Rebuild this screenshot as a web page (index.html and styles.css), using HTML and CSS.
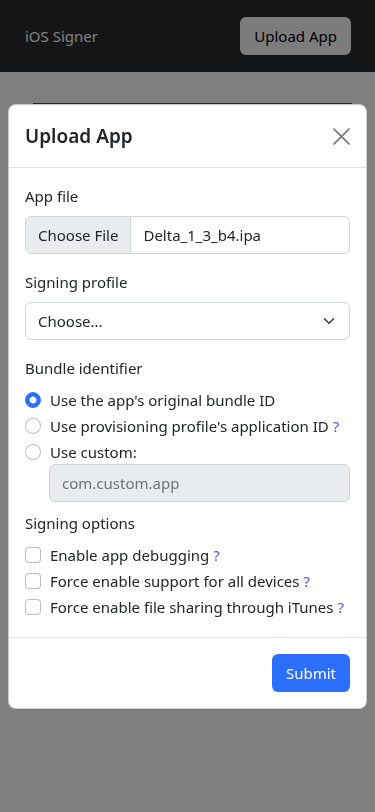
FILE: index.html
```html
<!DOCTYPE html>
<html lang="en">
<head>
    <meta charset="UTF-8">
    <meta name="viewport" content="width=device-width, initial-scale=1.0">
    <title>iOS Signer</title>
    <link rel="stylesheet" href="styles.css">
</head>
<body>
    <nav class="navbar">
        <span class="brand">iOS Signer</span>
        <button class="btn btn-light">Upload App</button>
    </nav>
    <main class="page">
        <div class="jobs-head"></div>
    </main>

    <div class="backdrop"></div>

    <div class="modal">
        <div class="modal-content">
            <div class="modal-header">
                <h5 class="modal-title">Upload App</h5>
                <button class="btn-close" aria-label="Close">
                    <svg width="17" height="17" viewBox="0 0 16 16">
                        <path d="M1 1 15 15M15 1 1 15" stroke="#808080" stroke-width="1.8" stroke-linecap="round" fill="none"/>
                    </svg>
                </button>
            </div>

            <form class="modal-body">
                <div class="field">
                    <label class="form-label">App file</label>
                    <div class="file-input">
                        <span class="file-btn">Choose File</span>
                        <span class="file-name">Delta_1_3_b4.ipa</span>
                    </div>
                </div>

                <div class="field">
                    <label class="form-label">Signing profile</label>
                    <div class="form-select">
                        <span>Choose...</span>
                        <svg width="16" height="12" viewBox="0 0 16 16">
                            <path d="m2 5 6 6 6-6" stroke="#343a40" stroke-width="2" stroke-linecap="round" stroke-linejoin="round" fill="none"/>
                        </svg>
                    </div>
                </div>

                <div class="field bundle">
                    <label class="form-label">Bundle identifier</label>
                    <label class="form-check">
                        <input type="radio" name="bundle" class="check-input radio" checked>
                        <span>Use the app's original bundle ID</span>
                    </label>
                    <label class="form-check">
                        <input type="radio" name="bundle" class="check-input radio">
                        <span>Use provisioning profile's application ID <a href="#" class="help">?</a></span>
                    </label>
                    <label class="form-check flush">
                        <input type="radio" name="bundle" class="check-input radio">
                        <span>Use custom:</span>
                    </label>
                    <input type="text" class="form-control custom-id" placeholder="com.custom.app" disabled>
                </div>

                <div class="field last">
                    <label class="form-label">Signing options</label>
                    <label class="form-check">
                        <input type="checkbox" class="check-input">
                        <span>Enable app debugging <a href="#" class="help">?</a></span>
                    </label>
                    <label class="form-check">
                        <input type="checkbox" class="check-input">
                        <span>Force enable support for all devices <a href="#" class="help">?</a></span>
                    </label>
                    <label class="form-check">
                        <input type="checkbox" class="check-input">
                        <span>Force enable file sharing through iTunes <a href="#" class="help">?</a></span>
                    </label>
                </div>
            </form>

            <div class="modal-footer">
                <button class="btn btn-primary">Submit</button>
            </div>
        </div>
    </div>
</body>
</html>
```

FILE: styles.css
```css
* {
    box-sizing: border-box;
}

body {
    margin: 0;
    font-family: "Noto Sans", "Open Sans", sans-serif;
    font-size: 15px;
    line-height: 24px;
    color: #212529;
    background-color: #fff;
}

.navbar {
    height: 72px;
    padding: 0 24px 1px 25px;
    background-color: #282a2e;
    display: flex;
    align-items: center;
    justify-content: space-between;
}

.brand {
    color: #fff;
    font-size: 15px;
}

.btn {
    font-family: inherit;
    font-size: 15px;
    line-height: 24px;
    padding: 6px 13px;
    border: 1px solid transparent;
    border-radius: 6px;
    cursor: pointer;
}

.btn-light {
    background-color: #f8f9fa;
    color: #000;
}

.btn-primary {
    background-color: #2d6ffd;
    color: #fff;
}

.page {
    padding: 31px 23px 0 33px;
}

.jobs-head {
    height: 40px;
    border-top: 2px solid #1a48c8;
}

.backdrop {
    position: fixed;
    inset: 0;
    background-color: rgba(0, 0, 0, 0.5);
}

.modal {
    position: fixed;
    inset: 0;
    padding: 104px 8px 0 8px;
}

.modal-content {
    background-color: #fff;
    border: 1px solid rgba(0, 0, 0, 0.2);
    border-radius: 8px;
}

.modal-header {
    display: flex;
    align-items: center;
    justify-content: space-between;
    height: 63px;
    padding: 16px;
    border-bottom: 1px solid #dee2e6;
}

.modal-title {
    margin: 0;
    font-size: 19px;
    font-weight: 600;
    line-height: 30px;
}

.btn-close {
    border: 0;
    background: none;
    padding: 0;
    width: 17px;
    height: 17px;
    display: flex;
    cursor: pointer;
}

.modal-body {
    padding: 16px;
}

.field {
    margin-bottom: 16px;
}

.field.bundle {
    margin-bottom: 9px;
}

.field.last {
    margin-bottom: 0;
}

.form-label {
    display: block;
    margin-bottom: 8px;
}

.file-input {
    display: flex;
    height: 38px;
    border: 1px solid #ced4da;
    border-radius: 6px;
    overflow: hidden;
}

.file-btn {
    padding: 6px 12px;
    background-color: #e9ecef;
    border-right: 1px solid #ced4da;
}

.file-name {
    padding: 6px 12px;
}

.form-select {
    height: 38px;
    padding: 6px 12px;
    border: 1px solid #ced4da;
    border-radius: 6px;
    display: flex;
    align-items: center;
    justify-content: space-between;
}

.form-check {
    display: flex;
    gap: 9px;
    min-height: 24px;
    margin-bottom: 2px;
}

.form-check.flush {
    margin-bottom: 0;
}

.check-input {
    appearance: none;
    flex: none;
    width: 16px;
    height: 16px;
    margin: 4px 0 0 0;
    border: 1px solid rgba(0, 0, 0, 0.25);
    border-radius: 4px;
    background-color: #fff;
}

.check-input.radio {
    border-radius: 50%;
}

.check-input.radio:checked {
    border-color: #2d6ffd;
    background: radial-gradient(circle, #fff 0 3.2px, #2d6ffd 3.8px);
}

.help {
    color: #5a4ff0;
    text-decoration: none;
}

.form-control {
    display: block;
    font-family: inherit;
    font-size: 15px;
    line-height: 24px;
    height: 38px;
    padding: 6px 12px;
    border: 1px solid #ced4da;
    border-radius: 6px;
}

.custom-id {
    width: calc(100% - 24px);
    margin-left: 24px;
    background-color: #e9ecef;
}

.custom-id::placeholder {
    color: #6c757d;
}

.modal-footer {
    display: flex;
    justify-content: flex-end;
    padding: 12px;
    border-top: 1px solid #dee2e6;
}

.modal-footer .btn {
    margin: 4px;
}
```
